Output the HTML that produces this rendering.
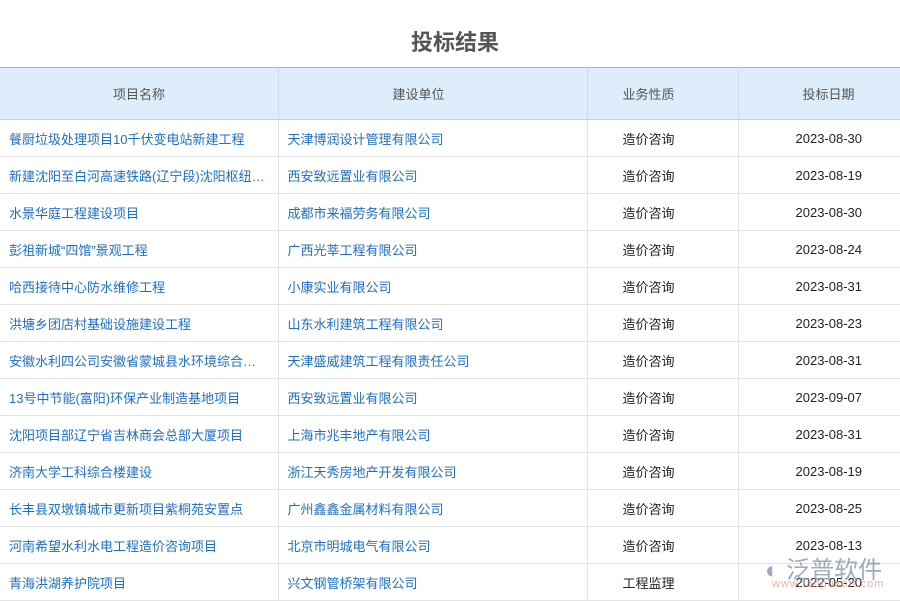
<!DOCTYPE html>
<html><head><meta charset="utf-8"><style>
body{margin:0;width:900px;height:600px;overflow:hidden;background:#fff;font-family:"Liberation Sans","Noto Sans CJK SC",sans-serif;position:relative}
h1{margin:0;position:absolute;top:28px;left:0;width:910px;text-align:center;font-size:22px;font-weight:bold;color:#555;line-height:30px}
table{position:absolute;top:67px;left:0;border-collapse:collapse;width:900px;table-layout:fixed}
th{height:51px;background:#deedfb;border-top:1px solid #8fbbe3;border-bottom:1px solid #b8d4ee;border-right:1px solid #c9dbee;font-weight:normal;font-size:13px;color:#555;text-align:left;padding:0}
td{height:36px;border-bottom:1px solid #e3e3e3;border-right:1px solid #e3e3e3;font-size:13px;padding:0 9px;white-space:nowrap;overflow:hidden;text-overflow:ellipsis}
td.a,td.b{color:#1e6fc4}
td.c{color:#222;padding-left:35px}
td.d{color:#222;padding-left:57px}
tr>*:last-child{border-right:none}
.wm{position:absolute;left:765px;top:550px;color:#8896b0;font-size:24px;opacity:.8}
.wm2{position:absolute;left:772px;top:578px;color:#e8a08a;font-size:11px;letter-spacing:1px;opacity:.8}
</style></head><body>
<h1>投标结果</h1>
<table>
<colgroup><col style="width:278px"><col style="width:309px"><col style="width:151px"><col style="width:162px"></colgroup>
<tr><th style="padding-left:113px">项目名称</th><th style="padding-left:114px">建设单位</th><th style="padding-left:35px">业务性质</th><th style="padding-left:64px">投标日期</th></tr>
<tr><td class="a">餐厨垃圾处理项目10千伏变电站新建工程</td><td class="b">天津博润设计管理有限公司</td><td class="c">造价咨询</td><td class="d">2023-08-30</td></tr>
<tr><td class="a">新建沈阳至白河高速铁路(辽宁段)沈阳枢纽工程</td><td class="b">西安致远置业有限公司</td><td class="c">造价咨询</td><td class="d">2023-08-19</td></tr>
<tr><td class="a">水景华庭工程建设项目</td><td class="b">成都市来福劳务有限公司</td><td class="c">造价咨询</td><td class="d">2023-08-30</td></tr>
<tr><td class="a">彭祖新城“四馆”景观工程</td><td class="b">广西光莘工程有限公司</td><td class="c">造价咨询</td><td class="d">2023-08-24</td></tr>
<tr><td class="a">哈西接待中心防水维修工程</td><td class="b">小康实业有限公司</td><td class="c">造价咨询</td><td class="d">2023-08-31</td></tr>
<tr><td class="a">洪塘乡团店村基础设施建设工程</td><td class="b">山东水利建筑工程有限公司</td><td class="c">造价咨询</td><td class="d">2023-08-23</td></tr>
<tr><td class="a">安徽水利四公司安徽省蒙城县水环境综合治理</td><td class="b">天津盛威建筑工程有限责任公司</td><td class="c">造价咨询</td><td class="d">2023-08-31</td></tr>
<tr><td class="a">13号中节能(富阳)环保产业制造基地项目</td><td class="b">西安致远置业有限公司</td><td class="c">造价咨询</td><td class="d">2023-09-07</td></tr>
<tr><td class="a">沈阳项目部辽宁省吉林商会总部大厦项目</td><td class="b">上海市兆丰地产有限公司</td><td class="c">造价咨询</td><td class="d">2023-08-31</td></tr>
<tr><td class="a">济南大学工科综合楼建设</td><td class="b">浙江天秀房地产开发有限公司</td><td class="c">造价咨询</td><td class="d">2023-08-19</td></tr>
<tr><td class="a">长丰县双墩镇城市更新项目紫桐苑安置点</td><td class="b">广州鑫鑫金属材料有限公司</td><td class="c">造价咨询</td><td class="d">2023-08-25</td></tr>
<tr><td class="a">河南希望水利水电工程造价咨询项目</td><td class="b">北京市明城电气有限公司</td><td class="c">造价咨询</td><td class="d">2023-08-13</td></tr>
<tr><td class="a">青海洪湖养护院项目</td><td class="b">兴文钢管桥架有限公司</td><td class="c">工程监理</td><td class="d">2022-05-20</td></tr>
</table>
<div class="wm">◐ 泛普软件</div>
<div class="wm2">www.fanpusoft.com</div>
</body></html>
